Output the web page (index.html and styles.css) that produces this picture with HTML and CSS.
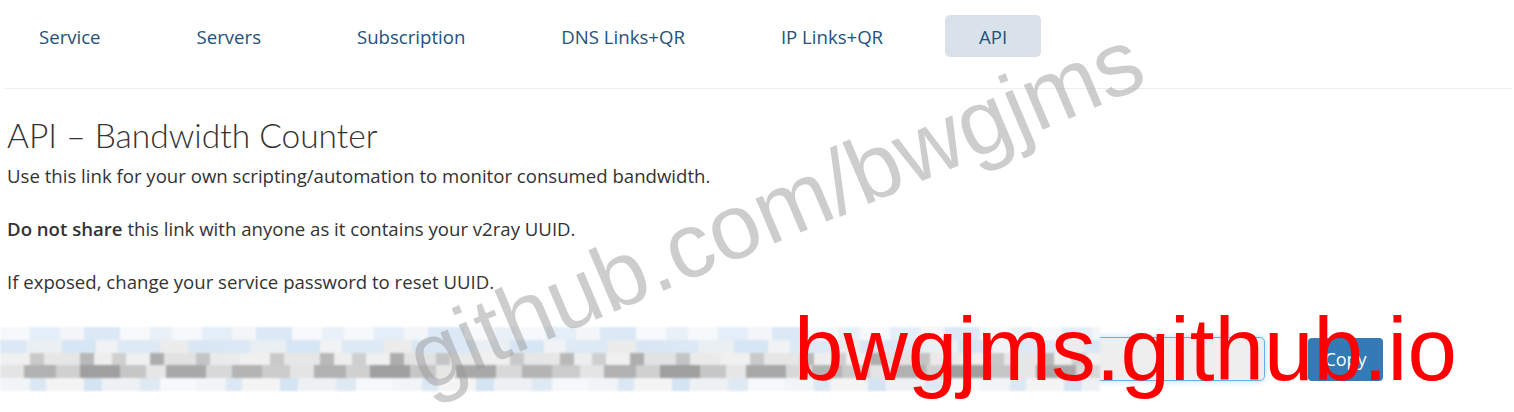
FILE: index.html
```html
<!DOCTYPE html>
<html lang="en">
<head>
<meta charset="utf-8">
<title>API – Bandwidth Counter</title>
<link rel="stylesheet" href="styles.css">
</head>
<body>
<div class="page">
  <nav class="tabs">
    <a class="tab">Service</a>
    <a class="tab">Servers</a>
    <a class="tab">Subscription</a>
    <a class="tab">DNS Links+QR</a>
    <a class="tab">IP Links+QR</a>
    <a class="tab active">API</a>
  </nav>
  <div class="rule"></div>
  <section class="content">
    <h1 class="title">API – Bandwidth Counter</h1>
    <p class="line">Use this link for your own scripting/automation to monitor consumed bandwidth.</p>
    <p class="line"><b>Do not share</b> this link with anyone as it contains your v2ray UUID.</p>
    <p class="line">If exposed, change your service password to reset UUID.</p>
    <div class="linkrow">
      <div class="field"></div>
      <button class="copy">Copy</button>
      <div class="mosaic">
        <div class="mrow r1"></div>
        <div class="mrow r2"></div>
        <div class="mrow r3"></div>
        <div class="mrow r4"></div>
        <div class="mrow r5"></div>
      </div>
    </div>
  </section>
  <div class="wm-gray">github.com/bwgjms</div>
  <div class="wm-red">bwgjms.github.io</div>
</div>
</body>
</html>
```
FILE: styles.css
```css
* { box-sizing: border-box; }
html, body { margin: 0; padding: 0; background: #fff; }
body {
  font-family: "Open Sans", "Liberation Sans", sans-serif;
  color: #333;
  overflow: hidden;
}
.page {
  position: relative;
  width: 1514px;
  height: 412px;
  padding: 15px 2px 0 5px;
}
.tabs {
  display: flex;
  gap: 28px;
  height: 42px;
}
.tab {
  display: flex;
  align-items: center;
  padding: 0 34px;
  height: 42px;
  border-radius: 5px;
  color: #23527c;
  font-size: 18.6px;
  text-decoration: none;
}
.tab.active { background: #d9e2ea; }
.rule {
  margin-top: 31px;
  height: 1px;
  background: #eceeef;
}
.content { padding-left: 2px; }
.title {
  margin: 26px 0 0;
  font-family: Lato, "Open Sans", sans-serif;
  font-weight: 300;
  font-size: 33.5px;
  line-height: 40px;
  color: #333;
}
.line {
  margin: 0 0 29px;
  font-size: 18.6px;
  line-height: 24px;
}
.line:first-of-type { margin-top: 9px; }
.line b { font-weight: 600; }
.linkrow {
  position: relative;
  display: flex;
  align-items: center;
  gap: 43px;
  margin-top: 43px;
  margin-left: -1px;
}
.field {
  width: 1259px;
  height: 44px;
  background: #eee;
  border: 1px solid #66afe9;
  border-radius: 5px;
  box-shadow: 0 0 6px rgba(102,175,233,.45);
}
.copy {
  width: 75px;
  height: 43px;
  border: 0;
  border-radius: 4px;
  background: #337ab7;
  color: #fff;
  font-family: "Open Sans", sans-serif;
  font-size: 18px;
  padding: 0;
}
.mosaic {
  position: absolute;
  left: -6px;
  top: -10px;
  width: 1100px;
  height: 64px;
  display: flex;
  flex-direction: column;
  filter: blur(1px);
}
.mrow { flex: 1; }
.r1 {
  background: repeating-linear-gradient(90deg,
    #f6f9fc 0 30px, #e4eef8 30px 60px, #f3f5f8 60px 84px, #dbe9f6 84px 120px,
    #f8f9fb 120px 150px, #e9f0f7 150px 172px);
}
.r2 {
  background: repeating-linear-gradient(90deg,
    #dbe8f5 0 26px, #eaeff4 26px 62px, #d7e6f4 62px 96px, #f0f2f4 96px 118px,
    #dde9f4 118px 160px, #ececec 160px 188px, #d9e7f5 188px 224px);
}
.r3 {
  background: repeating-linear-gradient(90deg,
    #f0f0f0 0 30px, #c9c9c9 30px 44px, #e6e6e6 44px 80px, #b8b8b8 80px 94px,
    #eeeeee 94px 112px, #cfcfcf 112px 126px, #f0f0f0 126px 150px, #adadad 150px 164px,
    #e2e2e2 164px 196px, #c4c4c4 196px 210px, #eaeaea 210px 240px);
}
.r4 {
  background: repeating-linear-gradient(90deg,
    #e4e4e4 0 24px, #b1b1b1 24px 56px, #d0d0d0 56px 80px, #9f9f9f 80px 120px,
    #c6c6c6 120px 146px, #e6e6e6 146px 166px, #a8a8a8 166px 206px, #d8d8d8 206px 232px,
    #b4b4b4 232px 262px, #cbcbcb 262px 290px);
}
.r5 {
  background: repeating-linear-gradient(90deg,
    #f2f5f8 0 30px, #dbe7f2 30px 46px, #f4f4f4 46px 84px, #d5e4f2 84px 102px,
    #eef1f4 102px 140px, #dfe9f3 140px 160px, #f7f8fa 160px 196px);
}
.wm-gray {
  position: absolute;
  left: 425px;
  top: 314px;
  font-family: "Liberation Sans", Arial, sans-serif;
  font-size: 92px;
  line-height: 1;
  white-space: nowrap;
  color: rgba(150,150,150,0.48);
  transform-origin: 0 78px;
  transform: rotate(-23deg);
  pointer-events: none;
}
.wm-red {
  position: absolute;
  left: 794px;
  top: 305px;
  font-family: "Liberation Sans", Arial, sans-serif;
  font-size: 89px;
  line-height: 1;
  white-space: nowrap;
  color: #ff0000;
  pointer-events: none;
}
```
